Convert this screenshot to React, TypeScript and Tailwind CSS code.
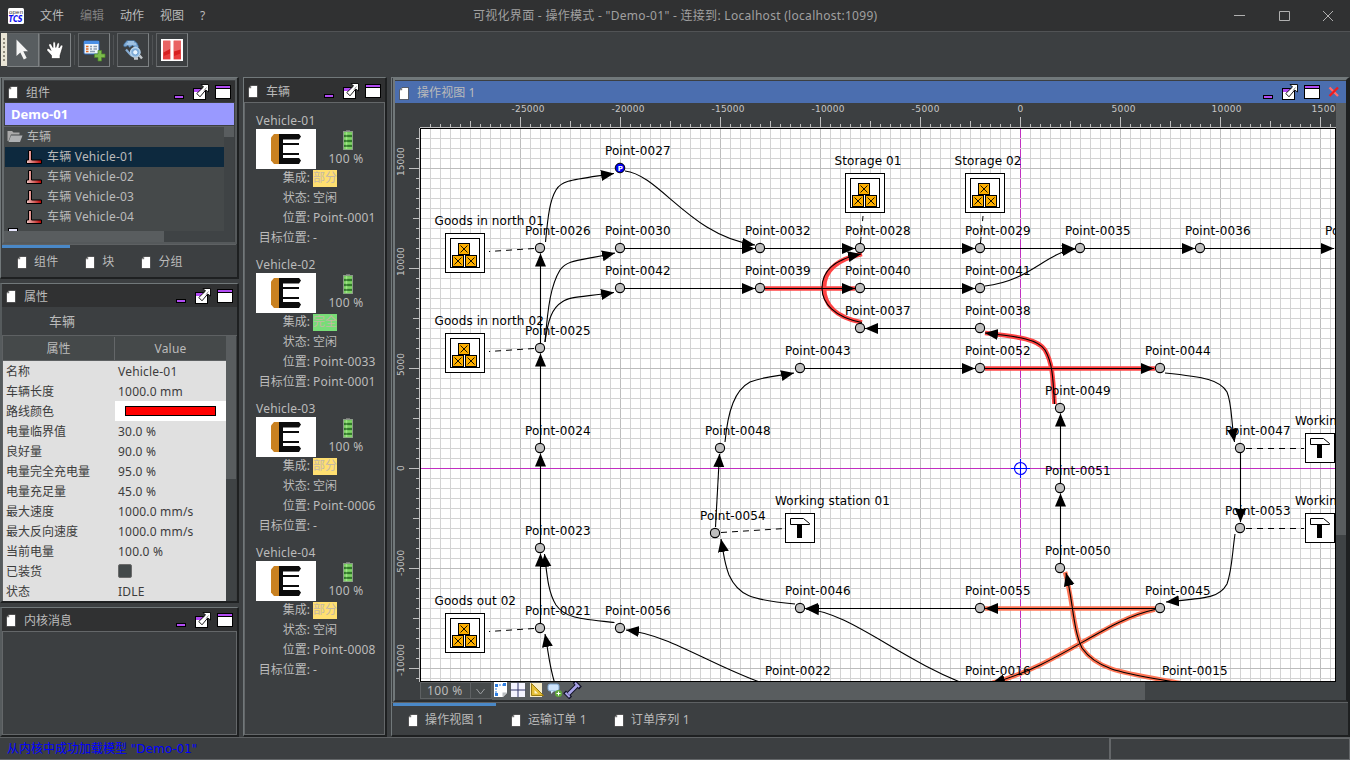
import React from "react";

type IconProps = { className?: string };

function DocIcon({ className = "" }: IconProps) {
  return (
    <svg width="10" height="13" viewBox="0 0 10 13" className={`shrink-0 ${className}`}>
      <path d="M3 0.5H9.5V12.5H0.5V3Z" fill="#fff" stroke="#222" strokeWidth="0.6" />
      <path d="M0.5 3.2H3.2V0.5Z" fill="#777" />
    </svg>
  );
}

function WindowButtons({ close = false }: { close?: boolean }) {
  const width = close ? 80 : 58;
  return (
    <svg width={width} height="18" viewBox={`0 0 ${width} 18`} className="shrink-0" shapeRendering="crispEdges">
      <rect x="0.5" y="12.5" width="9" height="3" fill="#b24bf3" stroke="#000" />
      <rect x="19.5" y="5.5" width="12" height="11" fill="#fff" stroke="#000" />
      <rect x="20" y="6" width="11" height="3" fill="#b24bf3" />
      <path d="M27 1.5H34.5V9L31.700 7L26 13.800L22.800 10.500L29.500 4Z" fill="#fff" stroke="#000" strokeWidth="0.900" shapeRendering="auto" />
      <path d="M30 7.500L32.500 4.500" stroke="#777" strokeWidth="0.800" shapeRendering="auto" />
      <rect x="41.5" y="2.5" width="15" height="13" fill="#fff" stroke="#000" />
      <rect x="42" y="3" width="14" height="2" fill="#b24bf3" />
      <path d="M42 5.5H56" stroke="#000" />
      {close && (
        <g shapeRendering="auto">
          <path d="M66.500 4.500L75 13" stroke="#ff6a6a" strokeWidth="2.300" />
          <path d="M75 4.500L66.500 13" stroke="#f01c1c" strokeWidth="2.300" />
        </g>
      )}
    </svg>
  );
}

function Header({ title, h = "h-[21px]", pl = "pl-1" }: { title: string; h?: string; pl?: string }) {
  return (
    <div className={`flex shrink-0 items-center justify-between bg-[#303132] pr-[3px] ${h} ${pl}`}>
      <div className="flex items-center gap-2 pt-[2px]">
        <DocIcon />
        <span>{title}</span>
      </div>
      <WindowButtons />
    </div>
  );
}

function Tab({ label, className = "" }: { label: string; className?: string }) {
  return (
    <div className={`flex items-center gap-[7px] tracking-[0.15px] ${className}`}>
      <DocIcon />
      <span>{label}</span>
    </div>
  );
}

/* ---------- toolbar ---------- */

function ToolButton({ children, pressed = false, className = "" }: { children: React.ReactNode; pressed?: boolean; className?: string }) {
  return (
    <div
      className={`flex h-[34px] w-8 items-center justify-center border border-t-[#606365] border-l-[#606365] border-r-[#7d8183] border-b-[#7d8183] ${pressed ? "bg-[#585d60]" : ""} ${className}`}
    >
      {children}
    </div>
  );
}

function Toolbar() {
  return (
    <div className="flex h-[45px] shrink-0 items-start pt-px pl-px">
      <div className="flex h-[33px] w-[6px] flex-col items-center justify-around bg-[#e9e5d6] py-1">
        {[0, 1, 2, 3, 4, 5].map((i) => (
          <span key={i} className="h-[2px] w-[2px] bg-[#8f8b7d]" />
        ))}
      </div>
      <ToolButton pressed>
        <svg width="18" height="24" viewBox="0 0 18 24">
          <path d="M2.500 1.500V18L6.300 14.500L9.800 21.500L12.700 20L9.300 13.300H14Z" fill="#f4f4f4" />
        </svg>
      </ToolButton>
      <ToolButton>
        <svg width="18" height="18" viewBox="0 0 18 18">
          <path
            d="M5.500 17.500V14.500L1 9.500C.5 7.800 2.300 6.800 3.700 8.200L5 9.500L2.700 4.200C2.700 2.400 4.600 2.100 5.300 3.600L7 6.500V2C7 .4 9.200 .4 9.400 2L9.800 6.500L11.200 2.700C11.700 1.200 13.700 1.600 13.400 3.400L12.900 7L14.600 4.700C15.500 3.400 17.300 4.300 16.700 5.800L14.800 12L14 14.500V17.500Z"
            fill="#fff"
            stroke="#111"
            strokeWidth="0.5"
          />
        </svg>
      </ToolButton>
      <span className="mt-[2px] ml-[3px] h-[30px] w-px bg-[#505355]" />
      <ToolButton className="ml-[3px]">
        <svg width="24" height="24" viewBox="0 0 24 24">
          <rect x="2" y="3" width="15" height="13" rx="1" fill="#eef5fc" stroke="#2c68b8" />
          <rect x="2" y="3" width="15" height="3" fill="#4a8fe6" />
          <path d="M4 8.500H6.500M4 11H6.500M4 13.500H6.500" stroke="#e06820" strokeWidth="1.700" />
          <path d="M8 8.500H10M11.500 8.500H15M8 11H10M11.500 11H15M8 13.500H13" stroke="#8a9bb0" strokeWidth="1.500" />
          <path d="M16 12.500h3.500v3.500H23V19.500h-3.500V23H16V19.500H12.500V16H16Z" fill="#7cba4c" stroke="#4d8a28" strokeWidth="0.700" />
        </svg>
      </ToolButton>
      <span className="mt-[2px] ml-[3px] h-[30px] w-px bg-[#505355]" />
      <ToolButton className="ml-[3px]">
        <svg width="22" height="22" viewBox="0 0 22 22">
          <path d="M2 5L5 1.500H12L15 4L16.500 7.500L16 9.500L13.500 9L10.500 6.500L7.500 8.500L6 6.500L3 8L1.500 7Z" fill="#7aa7d3" stroke="#3d668f" strokeWidth="0.700" />
          <path d="M6 3H12M4.500 5H14" stroke="#c0daf0" strokeWidth="1" />
          <path d="M4 10.500L7.500 14.500L10 17" stroke="#86acd2" strokeWidth="2.200" fill="none" />
          <circle cx="13.300" cy="13.300" r="4.800" fill="#86b3dc" stroke="#b8d4ec" strokeWidth="1.300" />
          <circle cx="13.300" cy="13.300" r="2.600" fill="#e8f5ff" stroke="#5a8fc4" strokeWidth="0.700" />
          <path d="M12 19.500H16M17.500 16.500L20 19.500" stroke="#c5cace" strokeWidth="2.400" />
        </svg>
      </ToolButton>
      <span className="mt-[2px] ml-[3px] h-[30px] w-px bg-[#505355]" />
      <ToolButton className="ml-[3px]">
        <svg width="22" height="22" viewBox="0 0 22 22">
          <rect width="22" height="22" fill="#fff" />
          <rect x="2" y="1.500" width="7.500" height="19" rx="0.500" fill="#e96464" />
          <rect x="12.500" y="1.500" width="7.500" height="19" rx="0.500" fill="#e96464" />
          <path d="M2.500 13.500L9 10V20H2.500ZM13 12.500L19.500 10.500V20H13Z" fill="#d92020" />
          <path d="M2.500 17L9 14.500V20H2.500ZM13 17L19.500 14.500V20H13Z" fill="#e83e3e" />
        </svg>
      </ToolButton>
    </div>
  );
}

/* ---------- left column ---------- */

function ForkIcon() {
  return (
    <svg width="17" height="15" viewBox="0 0 17 15" className="shrink-0">
      <defs>
        <linearGradient id="fork" x1="0" x2="1">
          <stop offset="0" stopColor="#f0c8c4" />
          <stop offset="1" stopColor="#b80000" />
        </linearGradient>
      </defs>
      <path d="M2.500 0.500H5.500V10H15.500V13.500H0.500V10H2.500Z" fill="url(#fork)" stroke="#000" />
    </svg>
  );
}

function ComponentsPanel() {
  const vehicles = ["车辆 Vehicle-01", "车辆 Vehicle-02", "车辆 Vehicle-03", "车辆 Vehicle-04"];
  return (
    <div className="flex h-[202px] w-[239px] flex-col border-t border-l border-r-2 border-b-2 border-t-[#71787a] border-l-[#71787a] border-r-[#1e2021] border-b-[#1e2021]">
      <div className="ml-px flex h-[166px] w-[235px] flex-col border-2 border-t-[#676c6e] border-l-[#676c6e] border-r-[#55595b] border-b-[#55595b] pt-px">
        <Header title="组件" />
        <div className="mt-px mr-px ml-px flex h-[22px] items-center bg-[#9999ff] pl-[6px] text-[13px] font-bold text-white">Demo-01</div>
        <div className="mt-px mr-px flex flex-1 overflow-hidden border-t border-[#5e6163]">
          <div className="flex flex-1 flex-col">
            <div className="h-[104px] overflow-hidden bg-[#45494a] pl-px">
              <div className="flex h-[20px] items-center gap-1 pb-px pl-[2px]">
                <svg width="16" height="13" viewBox="0 0 16 13">
                  <path d="M0.500 11V1H5L6.500 2.500H12.500V4.500H4L1.500 11Z" fill="#aaa" />
                  <path d="M4 5.500H15.500L13 12H1.500Z" fill="#afb1b3" />
                </svg>
                <span>车辆</span>
              </div>
              {vehicles.map((v, i) => (
                <div key={v} className={`flex h-5 items-center gap-1 pl-[21px] tracking-[0.2px] ${i === 0 ? "bg-[#0d293e]" : ""}`}>
                  <ForkIcon />
                  <span>{v}</span>
                </div>
              ))}
              <div className="mt-[1px] ml-[3px] h-3 w-[10px] border border-black bg-[#e8e8ff]" />
            </div>
            <div className="flex flex-1 bg-[#3f4345]">
              <div className="w-[160px] bg-[#595d5f]" />
            </div>
          </div>
          <div className="w-[10px] bg-[#3f4345]">
            <div className="h-[10px] bg-[#595d5f]" />
          </div>
        </div>
      </div>
      <div className="mx-px flex flex-1 flex-col border-t border-[#5e6163]">
        <div className="h-[3px] w-[68px] bg-[#4a88c7]" />
        <div className="flex flex-1 items-center pb-px pl-[15px]">
          <Tab label="组件" />
          <Tab label="块" className="ml-[27px]" />
          <Tab label="分组" className="ml-[27px]" />
        </div>
      </div>
    </div>
  );
}

const properties: [string, string][] = [
  ["名称", "Vehicle-01"],
  ["车辆长度", "1000.0 mm"],
  ["路线颜色", "color"],
  ["电量临界值", "30.0 %"],
  ["良好量", "90.0 %"],
  ["电量完全充电量", "95.0 %"],
  ["电量充足量", "45.0 %"],
  ["最大速度", "1000.0 mm/s"],
  ["最大反向速度", "1000.0 mm/s"],
  ["当前电量", "100.0 %"],
  ["已装货", "check"],
  ["状态", "IDLE"],
];

function PropertyValue({ value }: { value: string }) {
  if (value === "color")
    return (
      <div className="flex h-5 w-[111px] items-center bg-white pl-[10px]">
        <div className="h-[10px] w-[91px] border border-black bg-[#ff0000]" />
      </div>
    );
  if (value === "check") return <div className="ml-[3px] h-[14px] w-[14px] rounded-[2px] border border-[#6b6b6b] bg-[#43494a]" />;
  return <span className="pt-[2px] pl-[3px] tracking-[0.2px]">{value}</span>;
}

function PropertiesPanel() {
  return (
    <div className="mt-[4px] flex h-[320px] w-[239px] flex-col border-t border-l-2 border-r-2 border-b-2 border-t-[#71787a] border-l-[#565b5d] border-r-[#1e2021] border-b-[#1e2021]">
      <Header title="属性" h="h-[23px]" pl="pl-1" />
      <div className="flex h-[28px] items-center pl-[47px] text-[13px]">车辆</div>
      <div className="flex flex-1 overflow-hidden border-t border-l border-[#5e6163]">
        <div className="flex w-[223px] flex-col">
          <div className="flex h-[25px] shrink-0 border-b border-[#5e6163] bg-[#45494a] pt-[1px]">
            <div className="flex w-[112px] items-center justify-center border-r border-[#646769]">属性</div>
            <div className="flex flex-1 items-center justify-center tracking-[0.2px]">Value</div>
          </div>
          <div className="flex-1 overflow-hidden bg-[#e0e0e0] text-[#3c3c3c]">
            {properties.map(([name, value]) => (
              <div key={name} className="flex h-5 items-center">
                <span className="w-[112px] pt-[2px] pl-[3px]">{name}</span>
                <PropertyValue value={value} />
              </div>
            ))}
          </div>
        </div>
        <div className="w-[10px] bg-[#3f4345]">
          <div className="h-[143px] bg-[#595d5f]" />
        </div>
      </div>
    </div>
  );
}

function MessagesPanel() {
  return (
    <div className="mt-[4px] flex h-[130px] w-[239px] flex-col border-t border-l-2 border-r-2 border-b-2 border-t-[#71787a] border-l-[#565b5d] border-r-[#1e2021] border-b-[#1e2021]">
      <Header title="内核消息" h="h-[23px]" pl="pl-1" />
      <div className="flex-1 border border-[#646769] bg-[#3c3f41]" />
    </div>
  );
}

/* ---------- vehicles ---------- */

type Vehicle = { name: string; mode: string; tone: string; position: string; target: string };

const vehicleList: Vehicle[] = [
  { name: "Vehicle-01", mode: "部分", tone: "bg-[#ffdf70]", position: "Point-0001", target: "-" },
  { name: "Vehicle-02", mode: "完全", tone: "bg-[#77dd77]", position: "Point-0033", target: "Point-0001" },
  { name: "Vehicle-03", mode: "部分", tone: "bg-[#ffdf70]", position: "Point-0006", target: "-" },
  { name: "Vehicle-04", mode: "部分", tone: "bg-[#ffdf70]", position: "Point-0008", target: "-" },
];

function VehicleCard({ v }: { v: Vehicle }) {
  const row = (label: string, value: React.ReactNode) => (
    <div className="flex h-4 items-center gap-[3px]">
      <span className="w-[65px] text-right whitespace-nowrap">{label}:</span>
      {value}
    </div>
  );
  return (
    <div className="h-36">
      <div className="flex h-[18px] items-center pt-[2px] pl-[11px] tracking-[0.2px]">{v.name}</div>
      <div className="flex h-10 pl-[11px]">
        <svg width="60" height="40" viewBox="0 0 60 40" className="bg-white">
          <path d="M18 5H24V35H18L15 31.500V8.500Z" fill="#c98120" />
          <path d="M23 5H43L45 7.500L43 10.500H27V14H43V16H27V24H43V26H27V29H43L45 31.500L43 35H23Z" fill="#0c0c0c" />
        </svg>
        <div className="flex w-[64px] flex-col items-center pt-px">
          <svg width="10" height="21" viewBox="0 0 10 21">
            <rect x="3" y="0" width="4" height="2" fill="#777" />
            <rect x="0.500" y="1.500" width="9" height="18" fill="#49a23b" stroke="#8b9a88" />
            <path d="M1 3.500H9M1 8.500H9M1 13.500H9M1 18H9" stroke="#7fd266" strokeWidth="2.500" />
            <path d="M3.500 2V19" stroke="#b5f59c" strokeWidth="1.500" opacity="0.600" />
            <path d="M1 6H9M1 11H9M1 16H9" stroke="#1c531b" />
          </svg>
          <span className="h-4 pr-[4px] leading-4 tracking-[0.3px]">100 %</span>
        </div>
      </div>
      <div className="mt-px flex flex-col gap-1">
        {row("集成", <span className={`flex h-[17px] items-center text-[#c4b8a4] ${v.tone}`}>{v.mode}</span>)}
        {row("状态", <span>空闲</span>)}
        {row("位置", <span className="tracking-[0.2px]">{v.position}</span>)}
        {row("目标位置", <span className="tracking-[0.2px]">{v.target}</span>)}
      </div>
    </div>
  );
}

function VehiclesPanel() {
  return (
    <div className="ml-[4px] flex h-[660px] w-[144px] flex-col border-t border-l border-r-2 border-b-2 border-t-[#71787a] border-l-[#71787a] border-r-[#1e2021] border-b-[#1e2021]">
      <div className="flex h-[24px] flex-col justify-end bg-[#303132] pb-px">
        <Header title="车辆" />
      </div>
      <div className="flex-1 border border-[#646769] pt-[8px]">
        {vehicleList.map((v) => (
          <VehicleCard key={v.name} v={v} />
        ))}
      </div>
    </div>
  );
}

/* ---------- model view ---------- */

const points: [number, number, string][] = [
  [540, 248, "0026"], [620, 248, "0030"], [620, 288, "0042"], [540, 348, "0025"],
  [540, 448, "0024"], [540, 548, "0023"], [540, 628, "0021"], [620, 628, "0056"],
  [760, 248, "0032"], [860, 248, "0028"], [980, 248, "0029"], [1080, 248, "0035"],
  [1200, 248, "0036"], [1340, 248, "0031"], [760, 288, "0039"], [860, 288, "0040"],
  [980, 288, "0041"], [860, 328, "0037"], [980, 328, "0038"], [800, 368, "0043"],
  [980, 368, "0052"], [1160, 368, "0044"], [720, 448, "0048"], [715, 533, "0054"],
  [800, 608, "0046"], [980, 608, "0055"], [1160, 608, "0045"], [1060, 408, "0049"],
  [1060, 488, "0051"], [1060, 568, "0050"], [1240, 448, "0047"], [1240, 528, "0053"],
  [780, 688, "0022"], [980, 688, "0016"], [1177, 688, "0015"],
];

const edges: string[] = [
  "M545.5 242C548 215 550 200 556 190C562 180 572 180 614 173.5",
  "M625 171C660 175 690 236 755 245",
  "M545 342C548 305 551 285 560 270C568 259 580 261 615 253",
  "M545 342C548 320 552 308 562 302C570 296 585 297 614 292.5",
  "M540.5 343V253.500", "M540.5 443V353.500", "M540.5 543V453.500", "M540.5 623V553.500",
  "M614.500 622.500C580 619 565 618 556 605C548 592 547 575 544.500 554",
  "M765 684C710 665 670 635 626 630",
  "M555 684C549 665 549 655 545 634",
  "M625 248.500H755", "M765 248.500H855", "M865 248.500H975", "M985 248.500H1075",
  "M1085 248.500H1195", "M1205 248.500H1334", "M625 288.500H755", "M765 288.500H855",
  "M865 288.500H975", "M975 328.500H865", "M805 368.500H975", "M985 368.500H1154",
  "M1155 608.500H985", "M975 608.500H805",
  "M985 286C1030 281 1045 253 1075 249",
  "M862 322.500C834 317 822 303 822 288C822 270 836 259 861 254",
  "M1054.500 404C1053 375 1052 362 1045 350C1038 339 1020 337 985 333",
  "M1165 373C1205 377 1220 380 1227 392C1232 404 1231 420 1234.500 442",
  "M1235 534C1232 555 1232 570 1227 584C1220 597 1210 598 1166 602",
  "M795 604C750 600 738 595 729 575C724 562 724 555 721 539",
  "M715.500 527L719.500 454",
  "M725 442C728 410 735 390 750 382C765 376 780 376 794 373",
  "M1060.500 483V413.500", "M1060.500 563V493.500", "M1240.500 453V522",
  "M1180 683C1125 673 1098 671 1082 648C1073 630 1073 600 1066 573",
  "M1155 609.500C1105 620 1060 665 992 683",
  "M970 686C900 660 850 612 806 609",
];

const redRoutes = [
  "M765 288.500H855",
  "M862 322.500C834 317 824 303 824 288C824 270 838 259 862 254",
  "M1054.500 404C1053 375 1052 362 1045 350C1038 339 1020 337 985 333",
  "M985 368.500H1155",
];

const orangeRoutes = [
  "M1155 608.500H985",
  "M1180 683C1125 673 1098 671 1082 648C1073 630 1073 600 1065 572",
  "M1155 609.500C1105 620 1060 665 992 683",
];

const links = [
  "M534 248.500L489 251.500", "M534 348.500L489 351.500", "M534 628.500L489 631.500",
  "M860.500 243L863 216", "M980.500 243L983 216", "M721 532.500L785 528.500",
  "M1246 448.500H1304", "M1246 528.500H1304",
];

function range(from: number, to: number) {
  const out: number[] = [];
  for (let v = from; v <= to; v += 10) out.push(v);
  return out;
}

function Crate({ x, y }: { x: number; y: number }) {
  return (
    <g stroke="#000" strokeWidth="1">
      <rect x={x} y={y} width="11" height="11" fill="#ffb000" />
      <path d={`M${x + 2} ${y + 2}l7 7m0 -7l-7 7`} fill="none" strokeWidth="0.900" />
    </g>
  );
}

function Storage({ x, y, label }: { x: number; y: number; label: string }) {
  return (
    <g>
      <rect x={x + 0.5} y={y + 0.5} width="39" height="39" fill="#fff" stroke="#000" />
      <rect x={x + 5.5} y={y + 5.5} width="29" height="29" fill="#fff" stroke="#000" />
      <Crate x={x + 13.5} y={y + 10.5} />
      <Crate x={x + 7.5} y={y + 22.5} />
      <Crate x={x + 20.5} y={y + 22.5} />
      <text x={x - 10.5} y={y - 8}>{label}</text>
    </g>
  );
}

function Station({ x, y, label }: { x: number; y: number; label: string }) {
  return (
    <g>
      <rect x={x + 0.5} y={y + 0.5} width="29" height="29" fill="#fff" stroke="#000" />
      <path d={`M${x + 5.5} ${y + 5.5}h13l6 5v1h-19z`} fill="#fff" stroke="#000" />
      <rect x={x + 12} y={y + 11} width="5" height="14" />
      <text x={x - 10} y={y - 8}>{label}</text>
    </g>
  );
}

function ModelCanvas() {
  return (
    <svg width="916" height="554" viewBox="420 128 916 554" className="shrink-0 bg-white" fontFamily='"DejaVu Sans", sans-serif' fontSize="12" letterSpacing="0.100">
      <defs>
        <marker id="arrow" markerUnits="userSpaceOnUse" markerWidth="14" markerHeight="12" refX="13" refY="6" orient="auto">
          <path d="M0 0.500L13 6L0 11.500Z" />
        </marker>
      </defs>
      <g shapeRendering="crispEdges">
        {range(430, 1330).map((x) => (
          <path key={`x${x}`} d={`M${x + 0.5} 128V682`} stroke={x % 100 === 20 ? "#bdbdbd" : "#d3d3d3"} />
        ))}
        {range(138, 678).map((y) => (
          <path key={`y${y}`} d={`M420 ${y + 0.5}H1336`} stroke={y % 100 === 68 ? "#bdbdbd" : "#d3d3d3"} />
        ))}
        <rect x="420" y="468" width="916" height="1" fill="#c22fc2" />
        {range(128, 678).map((y) => (
          <rect key={`m${y}`} x="1020" y={y + 1} width="1" height="9" fill="#c22fc2" />
        ))}
      </g>
      <g fill="none" stroke="#000" strokeDasharray="6 5">
        {links.map((d) => <path key={d} d={d} />)}
      </g>
      <g fill="none" strokeWidth="4.600">
        {redRoutes.map((d) => <path key={d} d={d} stroke="#ff4444" />)}
        {orangeRoutes.map((d) => <path key={d} d={d} stroke="#ff7454" />)}
      </g>
      <g fill="none" stroke="#000" strokeWidth="1.100">
        {edges.map((d) => <path key={d} d={d} markerEnd="url(#arrow)" />)}
      </g>
      {points.map(([x, y, id]) => (
        <g key={id}>
          <circle cx={x} cy={y} r="4.600" fill="#bebebe" stroke="#000" strokeWidth="1.100" />
          <text x={x - 15} y={y - 13}>{`Point-${id}`}</text>
        </g>
      ))}
      <circle cx="620" cy="168" r="4.800" fill="#0000f0" stroke="#000" />
      <text x="617.700" y="170.800" fontSize="7" fontWeight="bold" fill="#fff">P</text>
      <text x="605" y="155">Point-0027</text>
      <Storage x={445} y={233} label="Goods in north 01" />
      <Storage x={445} y={333} label="Goods in north 02" />
      <Storage x={445} y={613} label="Goods out 02" />
      <Storage x={845} y={173} label="Storage 01" />
      <Storage x={965} y={173} label="Storage 02" />
      <Station x={785} y={513} label="Working station 01" />
      <Station x={1305} y={433} label="Working station 02" />
      <Station x={1305} y={513} label="Working station 03" />
      <g fill="none" stroke="#0000ff" strokeWidth="1.100">
        <circle cx="1020.500" cy="468.500" r="6" />
        <path d="M1011 468.500H1030M1020.500 459V478" />
      </g>
      <rect x="420.500" y="128.500" width="915" height="553" fill="none" stroke="#000" />
    </svg>
  );
}

function TopRuler() {
  return (
    <svg width="916" height="25" viewBox="420 103 916 25" className="shrink-0" fontFamily='"DejaVu Sans", sans-serif' fontSize="9" fill="#c6c6c6">
      <g stroke="#c0c0c0" shapeRendering="crispEdges">
        <path d="M420 127.500H1336" />
        {range(430, 1330).map((x) => (
          <path key={x} d={`M${x + 0.5} ${x % 100 === 20 ? 117 : x % 100 === 70 ? 121 : 124}V127`} />
        ))}
      </g>
      {[520, 620, 720, 820, 920, 1020, 1120, 1220, 1320].map((x, i) => (
        <text key={x} x={i === 5 ? 1017.5 : x - 8.5} y="112" textLength={[33, 33, 33, 33, 28, 6, 24, 30, 30][i]}>
          {(i - 5) * 5000}
        </text>
      ))}
    </svg>
  );
}

function LeftRuler() {
  return (
    <svg width="25" height="554" viewBox="395 128 25 554" className="shrink-0" fontFamily='"DejaVu Sans", sans-serif' fontSize="9" fill="#c6c6c6">
      <g stroke="#c0c0c0" shapeRendering="crispEdges">
        <path d="M419.500 128V682" />
        {range(138, 678).map((y) => (
          <path key={y} d={`M${y % 100 === 68 ? 409 : y % 100 === 18 ? 413 : 416} ${y + 0.5}H419`} />
        ))}
      </g>
      {[168, 268, 368, 468, 568, 668].map((y, i) => (
        <text key={y} transform={`translate(404 ${i === 3 ? 471 : y + 8}) rotate(-90)`}>
          {(3 - i) * 5000}
        </text>
      ))}
    </svg>
  );
}

function ViewTools() {
  return (
    <svg width="90" height="17" viewBox="0 0 90 17">
      <path d="M1 0H14V11L10 15H1Z" fill="#fff" />
      <path d="M3 3H12M3 3V13" stroke="#2d7de0" strokeDasharray="2 1" />
      <path d="M2 2h3v3h-3zM10 1h3v3h-3zM2 11h3v3h-3z" fill="#2d7de0" />
      <path d="M9.500 15V10.500H14Z" fill="#b8bcc0" />
      <rect x="18" y="1" width="14" height="14" fill="#f4f4ff" />
      <path d="M25 0.500V15M17.500 8H32.500" stroke="#33366a" />
      <rect x="37" y="1" width="12" height="14" fill="#f5ecca" />
      <path d="M38.500 1.500L50.500 13.500H38.500Z" fill="#e5bf35" stroke="#9b7c10" />
      <path d="M41.500 8L45 11.500H41.500Z" fill="#fff6cc" />
      <rect x="55" y="2" width="11" height="7" rx="2" fill="#cfe4fb" stroke="#7fa6cf" />
      <path d="M58 9V12L61 9Z" fill="#cfe4fb" />
      <circle cx="65.500" cy="11.500" r="3.500" fill="#5ea83a" />
      <path d="M63.500 11.500H67.500M65.500 9.500V13.500" stroke="#fff" />
      <g transform="translate(-0.500 0)">
        <g stroke="#14142a" fill="none">
          <path d="M76 12L84.500 3.500" strokeWidth="4.600" />
          <path d="M72 9.800L78.200 16M81.500 -0.500L88 6" strokeWidth="4" />
        </g>
        <g stroke="#a9a3e8" fill="none">
          <path d="M76 12L84.500 3.500" strokeWidth="2.600" />
          <path d="M73 10.800L77.200 15M82.500 0.800L86.800 5" strokeWidth="2" />
        </g>
      </g>
    </svg>
  );
}

function OperatingView() {
  return (
    <div className="ml-[4px] flex h-[660px] flex-1 flex-col border-t border-l border-r-2 border-b-2 border-t-[#71787a] border-l-[#71787a] border-r-[#1e2021] border-b-[#1e2021]">
      <div className="ml-px flex h-[624px] flex-col border-2 border-t-[#71787a] border-l-[#71787a] border-r-[#1e2021] border-b-[#2c2e2f] pt-px">
        <div className="flex h-[22px] shrink-0 items-center justify-between bg-[#4b6eaf] pr-[3px] pl-[4px]">
          <div className="flex items-center gap-2 pt-[2px]">
            <DocIcon />
            <span className="tracking-[0.1px]">操作视图 1</span>
          </div>
          <WindowButtons close />
        </div>
        <div className="flex flex-1">
          <div className="flex flex-col">
            <div className="flex h-[25px] pl-[25px]">
              <TopRuler />
            </div>
            <div className="flex h-[554px]">
              <LeftRuler />
              <ModelCanvas />
            </div>
          </div>
          <div className="flex-1 bg-[#3f4345]">
            <div className="h-[432px] bg-[#595d5f]" />
          </div>
        </div>
        <div className="flex h-[18px] shrink-0">
          <div className="ml-[25px] flex h-[17px] w-[72px] border border-[#5e6163] bg-[#45494a]">
            <span className="flex w-[50px] items-center border-r border-[#5e6163] pt-px pl-[6px] tracking-[0.4px]">100 %</span>
            <svg width="20" height="15" viewBox="0 0 20 15">
              <path d="M5.500 6L9.500 11L13.500 6" fill="none" stroke="#9a9da0" />
            </svg>
          </div>
          <div className="flex w-[653px] bg-[#595d5f] pl-px">
            <ViewTools />
          </div>
          <div className="flex-1 bg-[#3f4345]" />
        </div>
      </div>
      <div className="flex flex-1 flex-col border-t border-[#5e6163]">
        <div className="ml-px h-[3px] w-[103px] bg-[#4a88c7]" />
        <div className="flex flex-1 items-center pb-px pl-[16px]">
          <Tab label="操作视图 1" />
          <Tab label="运输订单 1" className="ml-[27px]" />
          <Tab label="订单序列 1" className="ml-[27px]" />
        </div>
      </div>
    </div>
  );
}

/* ---------- frame ---------- */

function TitleBar() {
  return (
    <div className="flex h-8 shrink-0 items-center border-b border-[#515355] bg-[#303132] pl-2">
      <svg width="16" height="16" viewBox="0 0 16 16">
        <rect width="16" height="16" rx="1.500" fill="#fff" />
        <text x="1" y="6" fontSize="6" fontFamily="Liberation Sans, sans-serif" fill="#333" textLength="14">open</text>
        <text x="0.500" y="14" fontSize="8" fontWeight="bold" fontStyle="italic" fontFamily="DejaVu Sans, sans-serif" fill="#0a0aee" textLength="14" lengthAdjust="spacingAndGlyphs">TCS</text>
      </svg>
      <div className="flex w-[449px] gap-4 pt-px pl-4">
        <span>文件</span>
        <span className="text-[#808080]">编辑</span>
        <span>动作</span>
        <span>视图</span>
        <span>?</span>
      </div>
      <div className="flex-1 pt-px whitespace-nowrap text-[#a0a0a0]">
        <span className="tracking-[0.290px]">可视化界面 - 操作模式 - "Demo-01" - 连接到: Localhost (localhost:1099)</span>
      </div>
      <svg width="118" height="14" viewBox="1232 9 118 14" fill="none" stroke="#b0b0b0">
        <path d="M1234 15.500H1245M1279.500 11.500H1289.500V20.500H1279.500ZM1323 11L1333 21M1333 11L1323 21" />
      </svg>
    </div>
  );
}

export default function App() {
  return (
    <div className='flex h-[760px] w-[1350px] flex-col overflow-hidden bg-[#3c3f41] font-["Noto_Sans","Noto_Sans_CJK_SC",sans-serif] text-[12px] leading-4 text-[#bbbbbb] select-none'>
      <TitleBar />
      <Toolbar />
      <div className="flex h-[660px] shrink-0">
        <div className="flex w-[239px] flex-col">
          <ComponentsPanel />
          <PropertiesPanel />
          <MessagesPanel />
        </div>
        <VehiclesPanel />
        <OperatingView />
      </div>
      <div className="flex flex-1 border-t border-[#5e6163]">
        <div className='flex w-[1110px] items-center border-r border-b border-[#646769] pl-[7px] font-["DejaVu_Sans","Noto_Sans_CJK_SC",sans-serif] text-[#0000ff]'>
          从内核中成功加载模型 "Demo-01"
        </div>
        <div className="flex-1 border border-[#646769]" />
      </div>
    </div>
  );
}
